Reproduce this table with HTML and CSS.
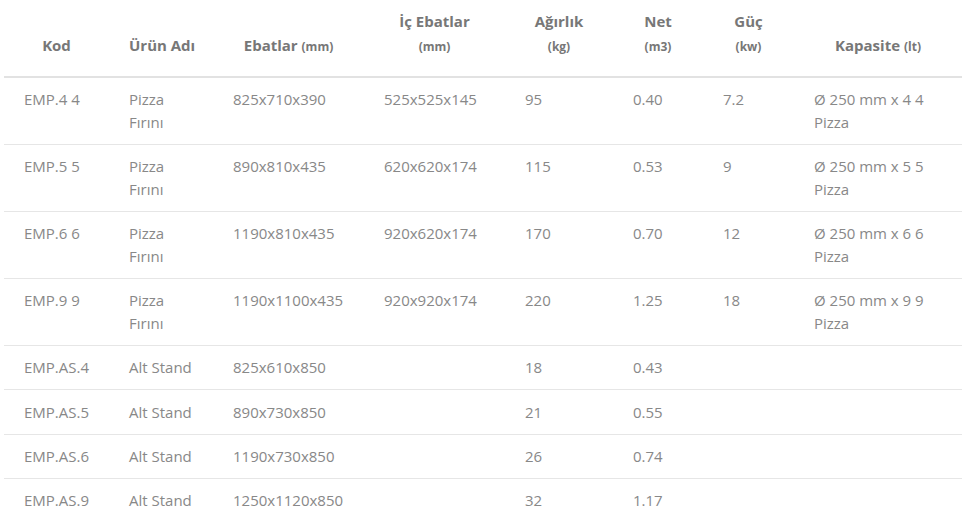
FILE: index.html
```html
<!DOCTYPE html>
<html lang="tr">
<head>
<meta charset="utf-8">
<title>Ürün Tablosu</title>
<link rel="stylesheet" href="styles.css">
</head>
<body>
<div class="wrap">
<table class="spec">
  <colgroup>
    <col class="c1"><col class="c2"><col class="c3"><col class="c4"><col class="c5"><col class="c6"><col class="c7"><col class="c8">
  </colgroup>
  <thead>
    <tr>
      <th>Kod</th>
      <th>Ürün Adı</th>
      <th>Ebatlar <small>(mm)</small></th>
      <th>İç Ebatlar<br><small>(mm)</small></th>
      <th>Ağırlık<br><small>(kg)</small></th>
      <th>Net<br><small>(m3)</small></th>
      <th>Güç<br><small>(kw)</small></th>
      <th>Kapasite <small>(lt)</small></th>
    </tr>
  </thead>
  <tbody>
    <tr><td>EMP.4 4</td><td>Pizza Fırını</td><td>825x710x390</td><td>525x525x145</td><td>95</td><td>0.40</td><td>7.2</td><td>Ø 250 mm x 4 4 Pizza</td></tr>
    <tr><td>EMP.5 5</td><td>Pizza Fırını</td><td>890x810x435</td><td>620x620x174</td><td>115</td><td>0.53</td><td>9</td><td>Ø 250 mm x 5 5 Pizza</td></tr>
    <tr><td>EMP.6 6</td><td>Pizza Fırını</td><td>1190x810x435</td><td>920x620x174</td><td>170</td><td>0.70</td><td>12</td><td>Ø 250 mm x 6 6 Pizza</td></tr>
    <tr><td>EMP.9 9</td><td>Pizza Fırını</td><td>1190x1100x435</td><td>920x920x174</td><td>220</td><td>1.25</td><td>18</td><td>Ø 250 mm x 9 9 Pizza</td></tr>
    <tr><td>EMP.AS.4</td><td>Alt Stand</td><td>825x610x850</td><td></td><td>18</td><td>0.43</td><td></td><td></td></tr>
    <tr><td>EMP.AS.5</td><td>Alt Stand</td><td>890x730x850</td><td></td><td>21</td><td>0.55</td><td></td><td></td></tr>
    <tr><td>EMP.AS.6</td><td>Alt Stand</td><td>1190x730x850</td><td></td><td>26</td><td>0.74</td><td></td><td></td></tr>
    <tr><td>EMP.AS.9</td><td>Alt Stand</td><td>1250x1120x850</td><td></td><td>32</td><td>1.17</td><td></td><td></td></tr>
  </tbody>
</table>
</div>
</body>
</html>
```
FILE: styles.css
```css
html, body {
  margin: 0;
  padding: 0;
  background: #fff;
}
body {
  font-family: "Open Sans", "Liberation Sans", sans-serif;
  font-size: 15px;
  color: #888;
}
.wrap {
  padding-left: 4px;
}
.spec {
  width: 958px;
  border-collapse: collapse;
  table-layout: fixed;
}
.c1 { width: 105px; }
.c2 { width: 104px; }
.c3 { width: 151px; }
.c4 { width: 141px; }
.c5 { width: 108px; }
.c6 { width: 90px; }
.c7 { width: 91px; }
.c8 { width: 168px; }
.spec th {
  font-weight: 700;
  color: #777;
  text-align: center;
  vertical-align: bottom;
  line-height: 24px;
  padding: 9px 20px 19px;
  border-bottom: 2px solid #e2e2e2;
  white-space: nowrap;
}
.spec th small {
  font-size: 12px;
  font-weight: 700;
  line-height: 1;
}
.spec td {
  text-align: left;
  vertical-align: top;
  line-height: 22.67px;
  padding: 10.33px 20px;
  border-bottom: 1px solid #e6e6e6;
}
.spec tbody tr:last-child td {
  border-bottom: none;
}
```
